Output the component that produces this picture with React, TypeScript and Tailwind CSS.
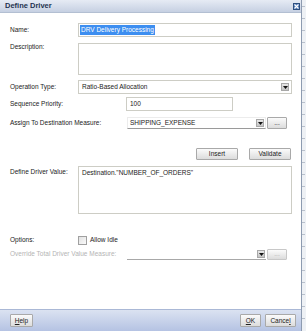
import React from "react";

const font = { fontFamily: '"Liberation Sans", Arial, sans-serif' };

function Arrow() {
  return (
    <div className="w-[8px] h-[8px] bg-gradient-to-b from-[#e8e8e8] to-[#c4c4c4] border border-[#a8a8a8] flex items-center justify-center">
      <svg width="5" height="3" viewBox="0 0 5 3">
        <path d="M0 0 L5 0 L2.5 3 Z" fill="#111" />
      </svg>
    </div>
  );
}

function Btn({ children, className = "" }: { children: React.ReactNode; className?: string }) {
  return (
    <div
      className={
        "flex items-center justify-center border border-[#a9a9a9] rounded-[1px] bg-gradient-to-b from-[#fbfbfb] to-[#dcdcdc] text-[6.5px] text-[#222] " +
        className
      }
    >
      {children}
    </div>
  );
}

export default function App() {
  return (
    <div className="w-[306px] h-[331px] flex bg-white overflow-hidden" style={font}>
      <div className="w-[302px] h-full flex flex-col border-r border-[#8d9bb0]">
        {/* title */}
        <div className="h-[13px] flex items-center justify-between pl-[5px] pr-[1px] bg-gradient-to-b from-[#e6ebf4] to-[#c6d0e2] border-b border-[#b3bfd2]">
          <span className="text-[7.5px] font-bold text-[#1f3350] leading-none">Define Driver</span>
          <div className="w-[7px] h-[7px] bg-[#4f78b5] border border-[#2d4f80] flex items-center justify-center">
            <svg width="5" height="5" viewBox="0 0 5 5">
              <path d="M0.5 0.5 L4.5 4.5 M4.5 0.5 L0.5 4.5" stroke="#fff" strokeWidth="1.2" />
            </svg>
          </div>
        </div>

        {/* body */}
        <div className="flex-1 flex flex-col pl-[10px] text-[6.5px] text-[#222] leading-none">
          {/* Name */}
          <div className="flex items-center mt-[10px] h-[14px]">
            <span className="w-[68px]">Name:</span>
            <div className="w-[214px] h-[14px] border border-[#cdcdc5] flex items-center pl-[1px]">
              <span className="bg-[#3d8ef0] text-white px-[1px] py-[1.5px]">DRV Delivery Processing</span>
            </div>
          </div>
          {/* Description */}
          <div className="flex items-start mt-[6px] h-[32px]">
            <span className="w-[68px] pt-[1px]">Description:</span>
            <div className="w-[214px] h-[32px] border border-[#cdcdc5]" />
          </div>
          {/* Operation Type */}
          <div className="flex items-center mt-[5px] h-[14px]">
            <span className="w-[68px]">Operation Type:</span>
            <div className="w-[214px] h-[14px] border border-[#cdcdc5] flex items-center justify-between pl-[3px] pr-[2px]">
              <span>Ratio-Based Allocation</span>
              <Arrow />
            </div>
          </div>
          {/* Sequence Priority */}
          <div className="flex items-center mt-[3px] h-[14px]">
            <span className="w-[116px]">Sequence Priority:</span>
            <div className="w-[107px] h-[14px] border border-[#cdcdc5] flex items-center pl-[3px]">100</div>
          </div>
          {/* Assign */}
          <div className="flex items-center mt-[6px] h-[12px]">
            <span className="w-[117px]">Assign To Destination Measure:</span>
            <div className="w-[139px] h-[12px] border border-[#ececec] border-b-[#9a9a9a] flex items-center justify-between pl-[2px] pr-[1px]">
              <span>SHIPPING_EXPENSE</span>
              <Arrow />
            </div>
            <Btn className="w-[20px] h-[12px] ml-[1px]">...</Btn>
          </div>
          {/* Insert / Validate */}
          <div className="flex mt-[19px] h-[12px]">
            <Btn className="w-[42px] h-[12px] ml-[186px]">Insert</Btn>
            <Btn className="w-[42px] h-[12px] ml-[11px]">Validate</Btn>
          </div>
          {/* Define Driver Value */}
          <div className="flex items-start mt-[6px] h-[48px]">
            <span className="w-[68px] pt-[3px]">Define Driver Value:</span>
            <div className="w-[214px] h-[48px] border border-[#cdcdc5] pl-[3px] pt-[3px]">
              Destination."NUMBER_OF_ORDERS"
            </div>
          </div>
          {/* Options */}
          <div className="flex items-center mt-[22px] h-[9px]">
            <span className="w-[68px]">Options:</span>
            <div className="w-[9px] h-[9px] border border-[#a0a0a0] bg-gradient-to-br from-[#e2e2e2] to-[#fafafa]" />
            <span className="ml-[3px]">Allow Idle</span>
          </div>
          {/* Override */}
          <div className="flex items-center mt-[4px] h-[11px]">
            <span className="w-[117px] text-[#b4b4b4]">Override Total Driver Value Measure:</span>
            <div className="w-[139px] h-[11px] border-b border-[#a8a8a8] flex items-center justify-end pr-[1px]">
              <Arrow />
            </div>
            <Btn className="w-[20px] h-[11px] ml-[1px] text-[#b0b0b0] border-[#c8c8c8]">...</Btn>
          </div>
        </div>

        {/* footer */}
        <div className="h-[22px] flex items-center justify-between pl-[10px] pr-[5px] bg-gradient-to-b from-[#dbe2f1] to-[#b5c3e3] border-t border-[#aab8d6]">
          <Btn className="w-[23px] h-[13px]">
            <span><span className="underline">H</span>elp</span>
          </Btn>
          <div className="flex gap-[4px]">
            <Btn className="w-[21px] h-[13px]">
              <span><span className="underline">O</span>K</span>
            </Btn>
            <Btn className="w-[31px] h-[13px]">
              <span>Cance<span className="underline">l</span></span>
            </Btn>
          </div>
        </div>
      </div>
      {/* page strip behind */}
      <div className="w-[4px] h-full bg-[#eef1f5] flex flex-col gap-[11px] pt-[6px]">
        {Array.from({ length: 27 }).map((_, i) => (
          <div key={i} className="h-[1px] w-[3px] bg-[#b8c0cc]" />
        ))}
      </div>
    </div>
  );
}
